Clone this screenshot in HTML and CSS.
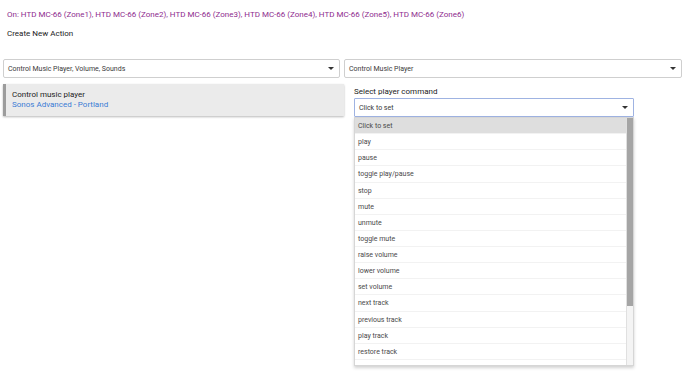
FILE: index.html
```html
<!DOCTYPE html>
<html>
<head>
<meta charset="utf-8">
<link rel="stylesheet" href="styles.css">
</head>
<body>
<div class="header">
  <div class="devices">On: HTD MC-66 (Zone1), HTD MC-66 (Zone2), HTD MC-66 (Zone3), HTD MC-66 (Zone4), HTD MC-66 (Zone5), HTD MC-66 (Zone6)</div>
  <div class="title">Create New Action</div>
</div>
<div class="select-row">
  <div class="sel"><span>Control Music Player, Volume, Sounds</span><i class="caret"></i></div>
  <div class="sel"><span>Control Music Player</span><i class="caret"></i></div>
</div>
<div class="action-row">
  <div class="card">
    <div class="card-title">Control music player</div>
    <div class="card-sub">Sonos Advanced - Portland</div>
  </div>
  <div class="command">
    <div class="cmd-label">Select player command</div>
    <div class="cmd-wrap">
      <div class="sel sel-focus"><span>Click to set</span><i class="caret"></i></div>
      <div class="menu">
        <ul class="menu-list">
          <li class="active">Click to set</li>
          <li>play</li>
          <li>pause</li>
          <li>toggle play/pause</li>
          <li>stop</li>
          <li>mute</li>
          <li>unmute</li>
          <li>toggle mute</li>
          <li>raise volume</li>
          <li>lower volume</li>
          <li>set volume</li>
          <li>next track</li>
          <li>previous track</li>
          <li>play track</li>
          <li>restore track</li>
          <li class="cut">resume track</li>
        </ul>
        <div class="scrollbar"><div class="thumb"></div></div>
      </div>
    </div>
  </div>
</div>
</body>
</html>
```
FILE: styles.css
```css
* { box-sizing: border-box; }
html, body { min-height: 100vh; }
body {
  margin: 0;
  font-family: Roboto, "Liberation Sans", sans-serif;
  color: #222;
  background: #fff;
}
.header { padding: 10px 7px 0; }
.devices {
  font-size: 8px;
  line-height: 10px;
  color: #8e2b8e;
}
.title {
  margin-top: 9px;
  font-size: 8px;
  line-height: 10px;
  color: #222;
}
.select-row {
  margin: 20px 0 0 3px;
  display: grid;
  grid-template-columns: 337px 338px;
  column-gap: 4px;
}
.sel {
  height: 19px;
  border: 1px solid #cfcfcf;
  border-radius: 2px;
  background: #fff;
  font-size: 7px;
  color: #3a3a3a;
  padding: 0 5px 0 4px;
  display: flex;
  align-items: center;
  justify-content: space-between;
}
.caret {
  width: 0;
  height: 0;
  border-left: 3px solid transparent;
  border-right: 3px solid transparent;
  border-top: 3px solid #333;
}
.action-row {
  margin: 6px 0 0 3px;
  display: grid;
  grid-template-columns: 341px 290px;
  align-items: start;
}
.card {
  height: 32px;
  background: #ebebeb;
  border-left: 3px solid #9c9c9c;
  box-shadow: 0 1px 2px rgba(0,0,0,0.28);
  padding: 6px 0 0 6px;
  font-size: 8px;
  line-height: 10px;
}
.card-title { color: #222; }
.card-sub { color: #3a7bd5; }
.command {
  margin-left: 10px;
  padding-top: 3px;
}
.cmd-label {
  font-size: 8px;
  line-height: 10px;
  color: #222;
  margin-bottom: 1px;
}
.cmd-wrap { position: relative; }
.sel-focus { border-color: #9fb3e2; border-radius: 1px; }
.menu {
  position: absolute;
  top: 19px;
  left: 0;
  width: 280px;
  height: 249px;
  display: flex;
  background: #fff;
  border: 1px solid #d6d6d6;
  box-shadow: 0 2px 3px rgba(0,0,0,0.18);
  overflow: hidden;
}
.menu-list {
  flex: 1;
  margin: 0;
  padding: 0;
  list-style: none;
  overflow: hidden;
}
.menu-list li {
  height: 16.14px;
  line-height: 17px;
  padding-left: 3px;
  font-size: 7px;
  color: #4a4a4a;
  border-bottom: 1px solid #f2f2f2;
}
.menu-list li.active { background: #dedede; }
.scrollbar {
  width: 7px;
  background: #f4f4f4;
  border-left: 1px solid #e0e0e0;
}
.thumb {
  height: 188px;
  background: #a5a5a5;
}
```
